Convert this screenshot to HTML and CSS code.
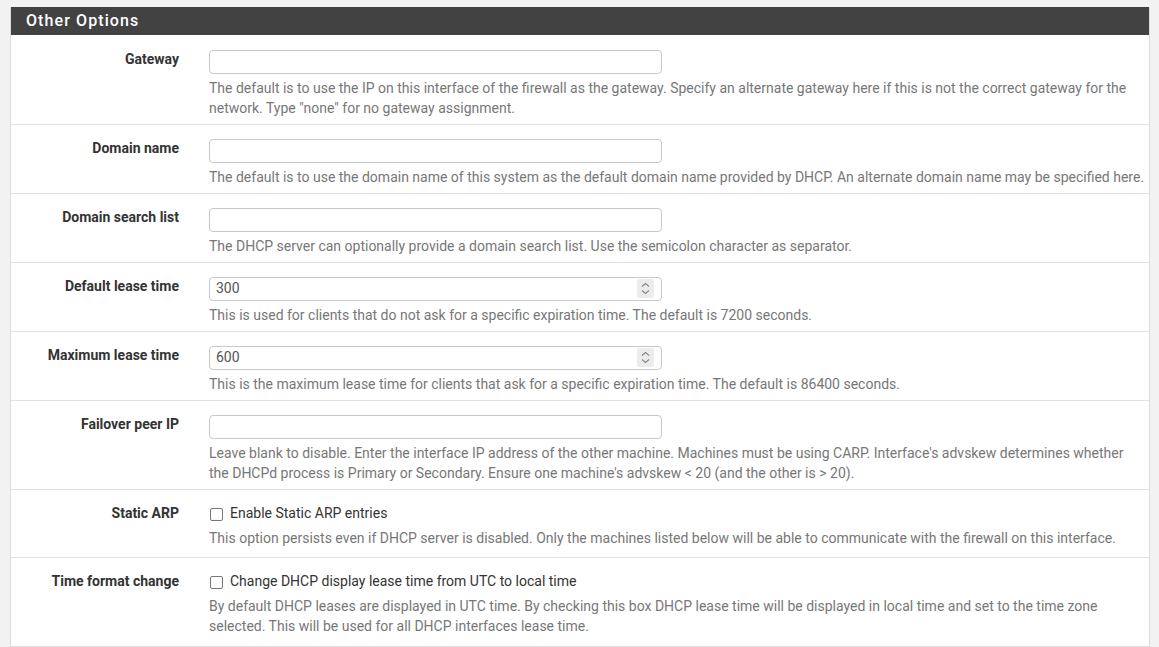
FILE: index.html
```html
<!DOCTYPE html>
<html>
<head>
<meta charset="utf-8">
<link rel="stylesheet" href="styles.css">
</head>
<body>
<div class="panel">
  <div class="panel-heading">Other Options</div>
  <div class="panel-body">
    <div class="row">
      <div class="label">Gateway</div>
      <div class="field">
        <input class="input" type="text">
        <div class="help">The default is to use the IP on this interface of the firewall as the gateway. Specify an alternate gateway here if this is not the correct gateway for the network. Type "none" for no gateway assignment.</div>
      </div>
    </div>
    <div class="row">
      <div class="label">Domain name</div>
      <div class="field">
        <input class="input" type="text">
        <div class="help">The default is to use the domain name of this system as the default domain name provided by DHCP. An alternate domain name may be specified here.</div>
      </div>
    </div>
    <div class="row">
      <div class="label">Domain search list</div>
      <div class="field">
        <input class="input" type="text">
        <div class="help">The DHCP server can optionally provide a domain search list. Use the semicolon character as separator.</div>
      </div>
    </div>
    <div class="row">
      <div class="label">Default lease time</div>
      <div class="field">
        <div class="num-wrap">
          <input class="input" type="text" value="300">
          <span class="spin"><svg width="17" height="19" viewBox="0 0 17 19"><path d="M5 7.5 L8.5 4.5 L12 7.5" fill="none" stroke="#888" stroke-width="1.1"/><path d="M5 11.5 L8.5 14.5 L12 11.5" fill="none" stroke="#888" stroke-width="1.1"/></svg></span>
        </div>
        <div class="help">This is used for clients that do not ask for a specific expiration time. The default is 7200 seconds.</div>
      </div>
    </div>
    <div class="row">
      <div class="label">Maximum lease time</div>
      <div class="field">
        <div class="num-wrap">
          <input class="input" type="text" value="600">
          <span class="spin"><svg width="17" height="19" viewBox="0 0 17 19"><path d="M5 7.5 L8.5 4.5 L12 7.5" fill="none" stroke="#888" stroke-width="1.1"/><path d="M5 11.5 L8.5 14.5 L12 11.5" fill="none" stroke="#888" stroke-width="1.1"/></svg></span>
        </div>
        <div class="help">This is the maximum lease time for clients that ask for a specific expiration time. The default is 86400 seconds.</div>
      </div>
    </div>
    <div class="row">
      <div class="label">Failover peer IP</div>
      <div class="field">
        <input class="input" type="text">
        <div class="help">Leave blank to disable. Enter the interface IP address of the other machine. Machines must be using CARP. Interface's advskew determines whether the DHCPd process is Primary or Secondary. Ensure one machine's advskew &lt; 20 (and the other is &gt; 20).</div>
      </div>
    </div>
    <div class="row row-check">
      <div class="label">Static ARP</div>
      <div class="field">
        <label class="check"><input type="checkbox" class="cb"> Enable Static ARP entries</label>
        <div class="help">This option persists even if DHCP server is disabled. Only the machines listed below will be able to communicate with the firewall on this interface.</div>
      </div>
    </div>
    <div class="row row-check">
      <div class="label">Time format change</div>
      <div class="field">
        <label class="check"><input type="checkbox" class="cb"> Change DHCP display lease time from UTC to local time</label>
        <div class="help">By default DHCP leases are displayed in UTC time. By checking this box DHCP lease time will be displayed in local time and set to the time zone selected. This will be used for all DHCP interfaces lease time.</div>
      </div>
    </div>
  </div>
</div>
</body>
</html>
```

FILE: styles.css
```css
html, body {
  margin: 0;
  padding: 0;
  background: #f2f2f2;
  font-family: Roboto, "Liberation Sans", sans-serif;
  font-size: 14px;
  color: #333;
}
body {
  padding: 7px 10px 0 10px;
}
.panel {
  width: 1140px;
  box-sizing: border-box;
  background: #fff;
  border-left: 1px solid #dcdcdc;
  border-right: 1px solid #dcdcdc;
}
.panel-heading {
  background: #424242;
  color: #fff;
  height: 28px;
  line-height: 28px;
  padding-left: 15px;
  font-size: 16px;
  font-weight: 500;
  letter-spacing: 1.1px;
}
.row {
  display: flex;
  padding: 14px 0 6px 0;
  border-bottom: 1px solid #e0e0e0;
}
.row:first-child {
  padding-top: 15px;
}
.row-check {
  padding-top: 13px;
  padding-bottom: 9px;
}
.row-check:last-child {
  padding-bottom: 10px;
}
.label {
  width: 183px;
  flex: none;
  box-sizing: border-box;
  padding-right: 15px;
  text-align: right;
  font-weight: 700;
  line-height: 18px;
  color: #333;
}
.row-check .label {
  line-height: 20px;
}
.field {
  flex: 1;
  padding-left: 15px;
  padding-right: 4px;
}
.input {
  display: block;
  width: 453px;
  height: 24px;
  box-sizing: border-box;
  border: 1px solid #c8c8c8;
  border-radius: 4px;
  padding: 0 6px 2px 6px;
  font-family: Roboto, "Liberation Sans", sans-serif;
  font-size: 14px;
  color: #555;
  background: #fff;
  margin: 0;
}
.num-wrap {
  position: relative;
  width: 453px;
}
.spin {
  position: absolute;
  right: 8px;
  top: 2px;
  width: 17px;
  height: 19px;
  background: #ececec;
  border-radius: 2px;
  display: flex;
}
.help {
  margin-top: 4px;
  line-height: 20px;
  color: #777;
}
.row-check .help {
  margin-top: 5px;
}
.check {
  display: flex;
  align-items: center;
  height: 20px;
  line-height: 20px;
  color: #333;
}
.cb {
  appearance: none;
  -webkit-appearance: none;
  width: 13px;
  height: 13px;
  box-sizing: border-box;
  border: 1px solid #767676;
  border-radius: 2px;
  margin: 2px 7px 0 1px;
  background: #fff;
}
```
